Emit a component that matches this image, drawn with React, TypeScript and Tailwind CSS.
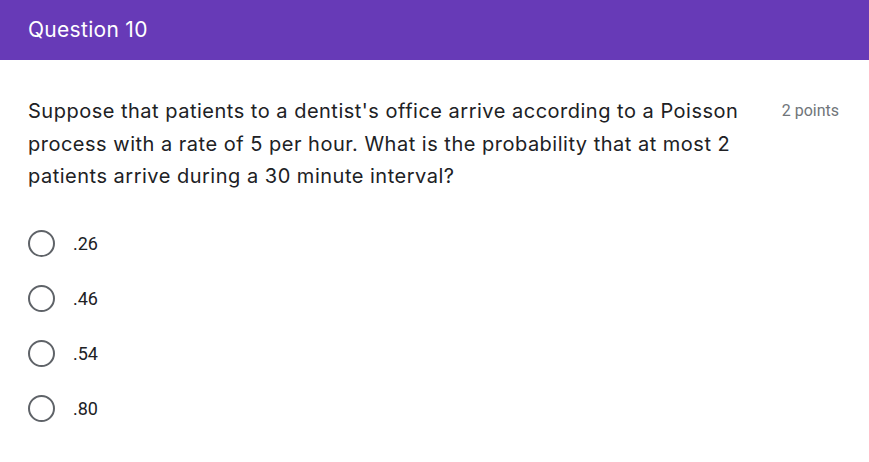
const options = [".26", ".46", ".54", ".80"];

export default function App() {
  return (
    <div className="w-[869px] h-[462px] bg-white overflow-hidden">
      <div className="h-[60px] bg-[#673ab7] flex items-center pl-[28px]">
        <span className="text-white text-[21px] font-['Inter',sans-serif] tracking-[0.3px]">
          Question 10
        </span>
      </div>

      <div className="flex pl-[28px] pr-[30px] pt-[35px]">
        <p className="w-[730px] text-[20px] leading-[32.5px] text-[#202124] font-['Inter',sans-serif] tracking-[0.5px]">
          Suppose that patients to a dentist's office arrive according to a Poisson
          process with a rate of 5 per hour. What is the probability that at most 2
          patients arrive during a 30 minute interval?
        </p>
        <span className="ml-auto pt-[6px] text-[16px] leading-[20px] text-[#70757a] font-['Roboto',sans-serif]">
          2 points
        </span>
      </div>

      <div className="flex flex-col pl-[28px] pt-[37px] gap-[28px]">
        {options.map((o) => (
          <label key={o} className="flex items-center h-[27px]">
            <span className="w-[27px] h-[27px] rounded-full border-2 border-[#5f6368]" />
            <span className="ml-[18px] text-[18px] text-[#202124] font-['Roboto',sans-serif]">
              {o}
            </span>
          </label>
        ))}
      </div>
    </div>
  );
}
